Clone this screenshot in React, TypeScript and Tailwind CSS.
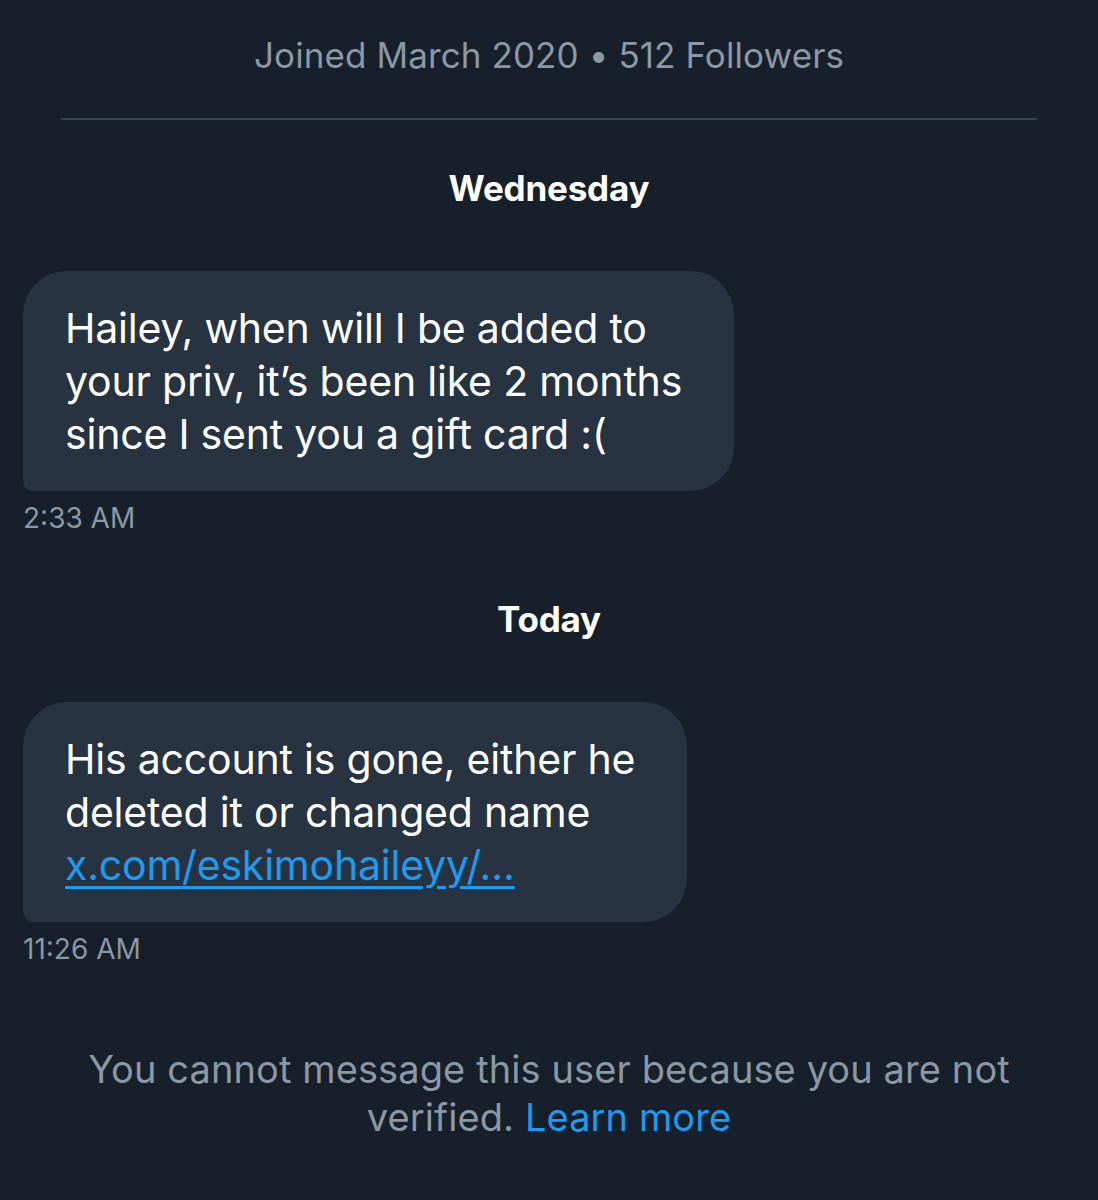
export default function App() {
  return (
    <div
      className="flex h-[1200px] w-[1098px] flex-col overflow-hidden bg-[#161f2a] text-white"
      style={{ fontFamily: "Inter, 'Noto Sans', sans-serif" }}
    >
      <div className="pt-[33px] text-center text-[35px] leading-[44px] tracking-[0.1px] text-[#8b98a5]">
        Joined March 2020 • 512 Followers
      </div>
      <div className="mx-[61px] mt-[41px] h-[2px] bg-[#38444d]" />

      <div className="mt-[48px] text-center text-[35px] font-bold leading-[40px] tracking-[-0.2px]">
        Wednesday
      </div>

      <div className="mt-[63px] flex flex-col items-start px-[23px]">
        <div className="rounded-[44px] rounded-bl-[10px] bg-[#273340] pb-[30px] pl-[42px] pr-[52px] pt-[31px] text-[41px] leading-[53px] tracking-[-0.2px]">
          Hailey, when will I be added to
          <br />
          your priv, it’s been like 2 months
          <br />
          since I sent you a gift card :(
        </div>
        <div className="mt-[10px] text-[28px] leading-[34px] text-[#8b98a5]">2:33 AM</div>
      </div>

      <div className="mt-[64px] text-center text-[35px] font-bold leading-[40px] tracking-[-0.2px]">
        Today
      </div>

      <div className="mt-[63px] flex flex-col items-start px-[23px]">
        <div className="rounded-[44px] rounded-bl-[10px] bg-[#273340] pb-[30px] pl-[42px] pr-[52px] pt-[31px] text-[41px] leading-[53px] tracking-[-0.2px]">
          His account is gone, either he
          <br />
          deleted it or changed name
          <br />
          <span className="text-[#1d9bf0] underline decoration-[3px] underline-offset-[6px]">x.com/eskimohaileyy/…</span>
        </div>
        <div className="mt-[10px] text-[28px] leading-[34px] text-[#8b98a5]">11:26 AM</div>
      </div>

      <div className="mt-[79px] text-center text-[38px] leading-[48px] tracking-[0.1px] text-[#8b98a5]">
        You cannot message this user because you are not
        <br />
        verified. <span className="text-[#1d9bf0]">Learn more</span>
      </div>
    </div>
  );
}
